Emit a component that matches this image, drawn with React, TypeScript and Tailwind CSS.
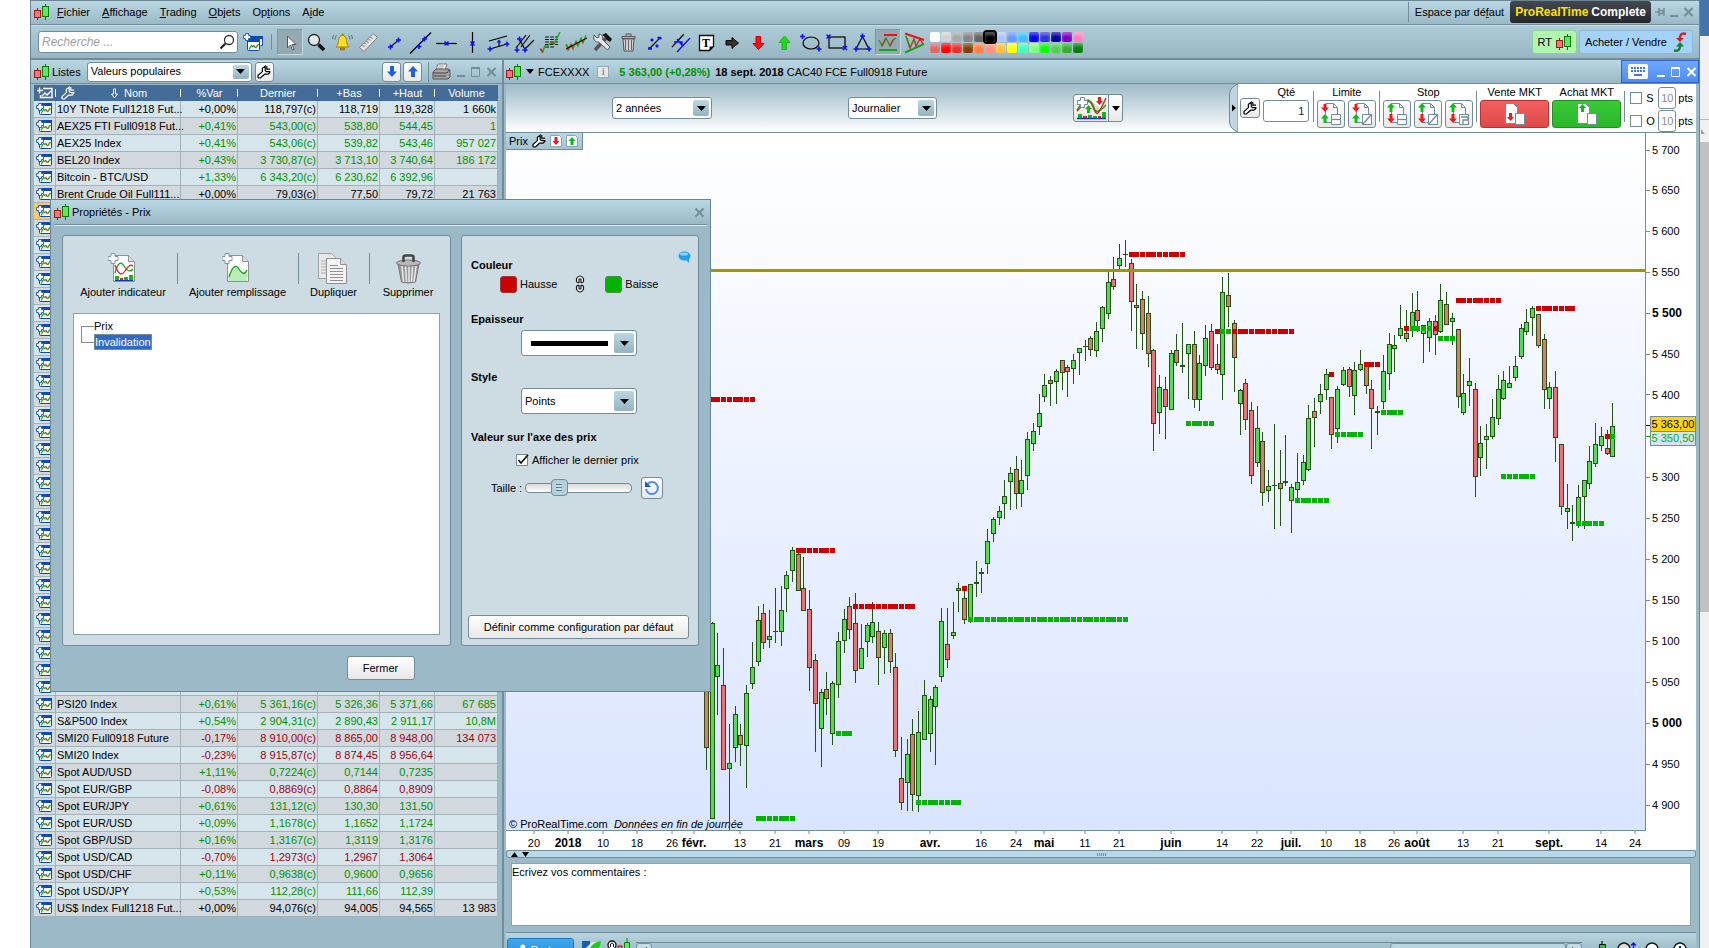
import type { ReactNode } from 'react';

type Tone = 'up' | 'down' | 'flat';
type Quote = [string, string, string, string, string, string, Tone];

const topQuotes: Quote[] = [
  ['10Y TNote Full1218 Fut...', '+0,00%', '118,797(c)', '118,719', '119,328', '1 660k', 'flat'],
  ['AEX25 FTI Full0918 Fut...', '+0,41%', '543,00(c)', '538,80', '544,45', '1', 'up'],
  ['AEX25 Index', '+0,41%', '543,06(c)', '539,82', '543,46', '957 027', 'up'],
  ['BEL20 Index', '+0,43%', '3 730,87(c)', '3 713,10', '3 740,64', '186 172', 'up'],
  ['Bitcoin - BTC/USD', '+1,33%', '6 343,20(c)', '6 230,62', '6 392,96', '', 'up'],
  ['Brent Crude Oil Full111...', '+0,00%', '79,03(c)', '77,50', '79,72', '21 763', 'flat'],
];

const bottomQuotes: Quote[] = [
  ['PSI20 Index', '+0,61%', '5 361,16(c)', '5 326,36', '5 371,66', '67 685', 'up'],
  ['S&P500 Index', '+0,54%', '2 904,31(c)', '2 890,43', '2 911,17', '10,8M', 'up'],
  ['SMI20 Full0918 Future', '-0,17%', '8 910,00(c)', '8 865,00', '8 948,00', '134 073', 'down'],
  ['SMI20 Index', '-0,23%', '8 915,87(c)', '8 874,45', '8 956,64', '', 'down'],
  ['Spot AUD/USD', '+1,11%', '0,7224(c)', '0,7144', '0,7235', '', 'up'],
  ['Spot EUR/GBP', '-0,08%', '0,8869(c)', '0,8864', '0,8909', '', 'down'],
  ['Spot EUR/JPY', '+0,61%', '131,12(c)', '130,30', '131,50', '', 'up'],
  ['Spot EUR/USD', '+0,09%', '1,1678(c)', '1,1652', '1,1724', '', 'up'],
  ['Spot GBP/USD', '+0,16%', '1,3167(c)', '1,3119', '1,3176', '', 'up'],
  ['Spot USD/CAD', '-0,70%', '1,2973(c)', '1,2967', '1,3064', '', 'down'],
  ['Spot USD/CHF', '+0,11%', '0,9638(c)', '0,9600', '0,9656', '', 'up'],
  ['Spot USD/JPY', '+0,53%', '112,28(c)', '111,66', '112,39', '', 'up'],
  ['US$ Index Full1218 Fut...', '+0,00%', '94,076(c)', '94,005', '94,565', '13 983', 'flat'],
];

const blankQuotes: Quote[] = Array.from({ length: 29 }, () => ['', '', '', '', '', '', 'flat'] as Quote);
const quotes = [...topQuotes, ...blankQuotes, ...bottomQuotes];

const toneClass: Record<Tone, string> = {
  up: 'text-[#009300]',
  down: 'text-[#a00010]',
  flat: 'text-black',
};

// x, high, body top, body bottom, low, direction (1 up, 0 down)
const candles: number[][] = [
  [706, 640, 650, 748, 770, 0], [712, 622, 623, 819, 819, 1], [717, 633, 665, 677, 715, 1], [723, 648, 685, 770, 770, 0],
  [729, 724, 763, 769, 830, 1], [735, 706, 714, 748, 762, 1], [740, 724, 735, 745, 766, 0], [746, 685, 693, 746, 788, 1],
  [752, 642, 667, 684, 689, 1], [758, 606, 620, 662, 666, 1], [763, 604, 613, 643, 649, 0], [769, 610, 636, 640, 648, 1],
  [775, 588, 631, 632, 643, 1], [781, 586, 610, 632, 646, 1], [786, 571, 575, 589, 612, 1], [792, 547, 550, 571, 582, 1],
  [798, 552, 554, 591, 591, 0], [803, 557, 588, 611, 611, 0], [809, 590, 609, 668, 691, 0], [815, 654, 660, 704, 752, 0],
  [821, 689, 692, 729, 767, 1], [826, 672, 689, 699, 715, 0], [832, 681, 683, 734, 745, 1], [838, 632, 641, 685, 698, 1],
  [844, 609, 619, 641, 653, 1], [849, 597, 606, 630, 639, 0], [855, 593, 623, 671, 683, 0], [861, 624, 648, 669, 669, 1],
  [867, 623, 625, 642, 657, 1], [872, 602, 622, 637, 643, 1], [878, 622, 631, 658, 685, 0], [884, 630, 633, 648, 674, 1],
  [890, 629, 633, 662, 673, 0], [895, 653, 667, 751, 757, 0], [901, 737, 778, 803, 810, 0], [907, 739, 754, 783, 811, 1],
  [912, 719, 734, 795, 811, 0], [918, 711, 732, 796, 812, 1], [924, 680, 695, 740, 740, 1], [930, 696, 699, 734, 752, 1],
  [935, 685, 687, 707, 765, 1], [941, 608, 621, 677, 682, 1], [947, 608, 644, 660, 668, 0], [953, 602, 632, 636, 639, 1],
  [958, 583, 588, 591, 612, 0], [964, 591, 598, 620, 624, 0], [970, 584, 584, 622, 623, 1], [976, 561, 582, 584, 597, 1],
  [981, 568, 572, 574, 593, 1], [987, 529, 541, 564, 574, 1], [993, 517, 519, 534, 542, 1], [999, 506, 511, 518, 525, 1],
  [1004, 480, 496, 504, 519, 1], [1010, 467, 473, 482, 510, 1], [1016, 456, 469, 494, 509, 0], [1021, 460, 480, 494, 507, 1],
  [1027, 432, 439, 476, 490, 1], [1033, 423, 431, 444, 451, 1], [1039, 394, 413, 427, 435, 1], [1044, 374, 385, 397, 402, 1],
  [1050, 376, 380, 384, 406, 0], [1056, 369, 371, 382, 404, 1], [1062, 360, 360, 373, 390, 0], [1067, 365, 367, 372, 397, 0],
  [1073, 354, 360, 369, 384, 1], [1079, 348, 348, 353, 375, 1], [1085, 340, 346, 347, 361, 1], [1090, 336, 338, 350, 356, 0],
  [1096, 322, 331, 351, 357, 1], [1102, 306, 307, 329, 342, 1], [1108, 272, 282, 314, 319, 1], [1113, 257, 279, 287, 290, 0],
  [1119, 244, 258, 266, 269, 1], [1125, 240, 254, 255, 267, 1], [1131, 259, 263, 302, 331, 0], [1136, 284, 305, 308, 349, 0],
  [1142, 291, 299, 334, 350, 0], [1148, 296, 313, 354, 367, 0], [1153, 349, 350, 424, 451, 0], [1159, 375, 387, 413, 434, 1],
  [1165, 377, 389, 407, 439, 0], [1171, 350, 353, 410, 410, 1], [1176, 334, 350, 363, 366, 0], [1182, 323, 365, 367, 373, 1],
  [1188, 344, 344, 354, 399, 1], [1194, 331, 344, 400, 408, 0], [1199, 355, 363, 400, 411, 1], [1205, 325, 338, 366, 376, 1],
  [1211, 324, 331, 368, 370, 0], [1217, 344, 364, 370, 374, 0], [1222, 277, 292, 375, 400, 1], [1228, 273, 295, 307, 327, 0],
  [1234, 320, 323, 358, 392, 0], [1240, 389, 390, 404, 435, 1], [1245, 379, 383, 420, 430, 0], [1251, 402, 410, 476, 484, 0],
  [1257, 406, 428, 463, 467, 1], [1262, 432, 441, 493, 506, 0], [1268, 470, 486, 491, 502, 1], [1274, 424, 485, 486, 529, 1],
  [1280, 450, 483, 489, 526, 0], [1285, 435, 481, 483, 486, 1], [1291, 484, 487, 501, 533, 1], [1297, 453, 482, 490, 498, 1],
  [1303, 455, 462, 481, 485, 1], [1308, 405, 418, 470, 471, 1], [1314, 398, 411, 418, 447, 0], [1320, 384, 394, 402, 414, 1],
  [1326, 369, 374, 390, 400, 1], [1331, 397, 397, 435, 449, 0], [1337, 386, 389, 429, 443, 1], [1343, 367, 370, 385, 386, 1],
  [1349, 367, 369, 387, 397, 0], [1354, 362, 370, 396, 415, 1], [1360, 350, 364, 370, 371, 1], [1366, 366, 366, 386, 394, 0],
  [1371, 380, 389, 409, 449, 0], [1377, 406, 411, 413, 435, 1], [1383, 355, 371, 402, 409, 1], [1389, 333, 344, 374, 390, 1],
  [1394, 335, 345, 349, 372, 1], [1400, 305, 328, 336, 339, 1], [1406, 310, 333, 339, 342, 0], [1412, 293, 312, 328, 337, 1],
  [1417, 291, 310, 321, 332, 0], [1423, 325, 325, 334, 363, 1], [1429, 318, 321, 338, 352, 1], [1435, 315, 321, 335, 355, 0],
  [1440, 284, 300, 332, 333, 1], [1446, 292, 304, 325, 325, 0], [1452, 313, 318, 322, 345, 1], [1458, 329, 329, 397, 408, 0],
  [1463, 374, 393, 413, 415, 1], [1469, 358, 381, 386, 406, 1], [1475, 383, 389, 477, 497, 0], [1480, 426, 443, 458, 476, 1],
  [1486, 424, 436, 440, 469, 1], [1492, 399, 417, 437, 439, 1], [1498, 375, 389, 419, 425, 1], [1503, 371, 380, 399, 400, 1],
  [1509, 366, 383, 388, 388, 1], [1515, 356, 366, 378, 381, 1], [1521, 324, 328, 357, 359, 1], [1526, 309, 322, 332, 335, 1],
  [1532, 306, 308, 318, 336, 1], [1538, 314, 314, 346, 348, 0], [1544, 334, 339, 390, 409, 0], [1549, 382, 387, 399, 409, 1],
  [1555, 371, 387, 438, 462, 0], [1561, 444, 444, 507, 515, 0], [1567, 484, 508, 512, 529, 1], [1572, 505, 522, 524, 541, 1],
  [1578, 485, 497, 522, 528, 1], [1584, 480, 480, 497, 529, 1], [1589, 446, 461, 484, 489, 1], [1595, 423, 444, 464, 467, 1],
  [1601, 427, 436, 446, 451, 1], [1607, 430, 448, 454, 455, 0], [1612, 403, 426, 457, 457, 1],
];

// first x, last x, y, kind (1 support, 0 resistance)
const levels: number[][] = [
  [712, 752, 399, 0], [798, 832, 550, 0], [855, 912, 606, 0], [964, 964, 588, 0], [970, 1125, 619, 1], [838, 849, 733, 1],
  [918, 958, 802, 1], [758, 792, 818, 1], [1131, 1182, 254, 0], [1188, 1211, 423, 1], [1217, 1217, 331, 0], [1222, 1228, 331, 1],
  [1234, 1291, 331, 0], [1331, 1331, 374, 0], [1297, 1326, 500, 1], [1337, 1360, 434, 1], [1366, 1377, 364, 0],
  [1383, 1400, 412, 1], [1406, 1406, 328, 0], [1412, 1429, 328, 1], [1435, 1435, 328, 0], [1440, 1452, 338, 1],
  [1458, 1498, 300, 0], [1503, 1532, 476, 1], [1538, 1572, 308, 0], [1578, 1601, 523, 1], [1607, 1607, 436, 0], [1612, 1612, 436, 1],
];

const dates: [string, number][] = [
  ['20', 534], ['2018', 568], ['10', 603], ['18', 637], ['26', 672], ['févr.', 694], ['13', 740], ['21', 775], ['mars', 809],
  ['09', 844], ['19', 878], ['avr.', 930], ['16', 981], ['24', 1016], ['mai', 1044], ['11', 1085], ['21', 1119], ['juin', 1171],
  ['14', 1222], ['22', 1257], ['juil.', 1291], ['10', 1326], ['18', 1360], ['26', 1394], ['août', 1417], ['13', 1463],
  ['21', 1498], ['sept.', 1549], ['14', 1601], ['24', 1635],
];

const prices = [5700, 5650, 5600, 5550, 5500, 5450, 5400, 5300, 5250, 5200, 5150, 5100, 5050, 5000, 4950, 4900];

const PLOT = { x: 506, y: 133, w: 1139, h: 697 };

const topColors = [
  'bg-[#ffffff]', 'bg-[#d0d0d0]', 'bg-[#a8a8a8]', 'bg-[#868686]', 'bg-[#646464]', 'bg-[#000000]', 'bg-[#b0c4ff]',
  'bg-[#6699ff]', 'bg-[#3fbfff]', 'bg-[#0000f0]', 'bg-[#3333d8]', 'bg-[#0000a0]', 'bg-[#8000c0]', 'bg-[#ff80c0]',
];
const bottomColors = [
  'bg-[#e06666]', 'bg-[#ff0000]', 'bg-[#e83030]', 'bg-[#804000]', 'bg-[#ff8040]', 'bg-[#ff9080]', 'bg-[#ffc040]',
  'bg-[#ffff00]', 'bg-[#40ffc0]', 'bg-[#80ff80]', 'bg-[#00ff00]', 'bg-[#50d050]', 'bg-[#30b030]', 'bg-[#008000]',
];

const bar = 'bg-linear-to-b from-[#bad7e4] to-[#9ab8c5]';
const softButton = 'rounded-[3px] border border-[#738c99] bg-linear-to-b from-white to-[#e8e8e8]';

function Candles() {
  return (
    <svg width="15" height="16" viewBox="0 0 15 16" shapeRendering="crispEdges" className="shrink-0">
      <path d="M3.5 4v12" stroke="#a01818" />
      <rect x=".5" y="6.5" width="6" height="7" fill="#f07878" stroke="#a01818" />
      <path d="M11.5 0v16" stroke="#0a7a0a" />
      <rect x="8.5" y="2.5" width="6" height="10" fill="#5de85d" stroke="#0a7a0a" />
    </svg>
  );
}

function Wrench({ className = 'text-black', fill = '#fff' }: { className?: string; fill?: string }) {
  return (
    <svg width="14" height="14" viewBox="0 0 14 14" className={className}>
      <path
        d="M8.2 1.2v4.2l1.2 1.2h3.4v.8L11 9.2H7.6L3.4 13H1.6L1 12.4v-1.8l4.4-4V3.2zM9.8 1v3.2h3.2"
        fill={fill}
        stroke="currentColor"
        strokeWidth="1.2"
      />
    </svg>
  );
}

function WindowGlyph({ big = false }: { big?: boolean }) {
  return (
    <svg width={big ? 20 : 16} height={big ? 19 : 12} viewBox={big ? '0 0 20 19' : '0 0 16 12'} className="block">
      {big && <path d="M5.5 6V3.5h14v9h-2" fill="#fff" stroke="#0b48b8" />}
      {big && <path d="M5 3h15v3H5z" fill="#0b48b8" />}
      <g transform={big ? 'translate(1 6)' : ''}>
        <rect x="3.5" y=".5" width="12" height="11" rx="1" fill="#fff" stroke="#0b48b8" />
        <path d="M3 0h13v3H3z" fill="#0b48b8" />
        <path d="M5 10.500l2.500-4 2 1.500" fill="none" stroke="#10b020" strokeWidth="1.300" />
        <path d="M9.500 6l2 3" fill="none" stroke="#e02020" strokeWidth="1.300" />
        <path d="M11.500 9l3-4" fill="none" stroke="#10b020" strokeWidth="1.300" />
      </g>
      <path d="M2.500.500h3v2h2v3h-2v2h-3v-2h-2v-3h2z" fill="#fff" stroke="#2a62c8" />
    </svg>
  );
}

function WindowButtons({ max = true, tone = 'text-[#738c99]' }: { max?: boolean; tone?: string }) {
  return (
    <div className={`flex items-center gap-1 ${tone}`}>
      <button aria-label="Réduire">
        <svg width="10" height="12" viewBox="0 0 10 12"><path d="M1 10h8" stroke="currentColor" strokeWidth="2" /></svg>
      </button>
      {max && (
        <button aria-label="Agrandir">
          <svg width="12" height="12" viewBox="0 0 12 12"><path d="M1.500 2v8.500h8V2z" fill="none" stroke="currentColor" /><path d="M1 2h9" stroke="currentColor" strokeWidth="2" /></svg>
        </button>
      )}
      <button aria-label="Fermer la fenêtre">
        <svg width="11" height="12" viewBox="0 0 11 12"><path d="M1.500 2l8 8M9.500 2l-8 8" stroke="currentColor" strokeWidth="2" /></svg>
      </button>
    </div>
  );
}

function Combo({ label, value, className, arrow = 'w-4', children }: { label: string; value: string; className: string; arrow?: string; children?: ReactNode }) {
  return (
    <div className={`relative ${className}`}>
      <select aria-label={label} className="h-full w-full appearance-none rounded-[3px] border border-[#738c99] bg-white px-[3px] text-[11px] leading-none">
        <option>{value}</option>
      </select>
      {children}
      <span className={`pointer-events-none absolute top-[3px] right-[3px] bottom-[3px] flex items-center justify-center rounded-[2px] bg-linear-to-b from-[#bad7e4] to-[#94b3c1] ${arrow}`}>
        <svg width="9" height="5" viewBox="0 0 9 5"><path d="M0 0h9L4.500 5z" /></svg>
      </span>
    </div>
  );
}

function Star({ x, y }: { x: number; y: number }) {
  return <path d={`M${x - 2.5} ${y}h5M${x} ${y - 2.5}v5`} stroke="#1010ff" strokeWidth="1.6" />;
}

const k = { fill: 'none', stroke: '#000', strokeWidth: 1.2 };

const tools: { name: string; on?: boolean; art: ReactNode }[] = [
  { name: 'Curseur', on: true, art: <path d="M8.500 5v12l3-3 2 5 1.500-.800-2-4.700h4z" fill="#fff" stroke="#555" /> },
  {
    name: 'Loupe',
    art: (
      <>
        <circle cx="9" cy="9" r="5.500" fill="#e0e8ec" stroke="#222" strokeWidth="1.300" />
        <path d="M6 8q1-2.500 4-2.500" fill="none" stroke="#fff" strokeWidth="1.500" />
        <path d="M13.500 13.500l5.500 5.500" stroke="#111" strokeWidth="3.500" />
      </>
    ),
  },
  {
    name: 'Alerte',
    art: (
      <>
        <path d="M5 16c2-2 2-3 2.500-6.500C8 6 9.500 4.500 11.500 4.500S15 6 15.500 9.500c.5 3.500.5 4.500 2.500 6.500z" fill="#ffe020" stroke="#a08010" />
        <path d="M9.500 17h4v2h-4z" fill="#d09000" stroke="#806000" strokeWidth=".7" />
        <path d="M11.500 2.500v2" stroke="#a08010" strokeWidth="2" />
        <path d="M5.500 4.500Q4 6 4 8.500M3 4Q1.500 5.500 1.500 8M17.500 4.500q1.500 1.500 1.500 4M20 4q1.500 1.500 1.500 4" fill="none" stroke="#607078" />
      </>
    ),
  },
  {
    name: 'Règle',
    art: (
      <>
        <path d="M2.500 16.500L16 2.500l4.500 4L7 20.500z" fill="#e2e2e2" stroke="#808080" />
        <path d="M5.500 14l2 2M7.500 12l1.500 1.500M9.500 10l2 2M11.500 8l1.500 1.500M13.500 6l2 2" stroke="#666" />
      </>
    ),
  },
  { name: 'Segment', art: <><path d="M7 16.500L16 8.500" {...k} /><Star x={7.5} y={16} /><Star x={15.5} y={9} /></> },
  { name: 'Droite', art: <><path d="M1 22.500L22 1.500" {...k} /><Star x={10} y={15.5} /><Star x={15.5} y={8} /></> },
  { name: 'Horizontale', art: <><path d="M1 12.500h21" {...k} /><path d="M9.500 10.500l4 4M13.500 10.500l-4 4" stroke="#1010ff" strokeWidth="1.600" /></> },
  { name: 'Verticale', art: <><path d="M11.500 1v21" {...k} /><path d="M9.500 10.500l4 4M13.500 10.500l-4 4" stroke="#1010ff" strokeWidth="1.600" /></> },
  { name: 'Canal', art: <><path d="M2 10l18-5M3 18l17-5M12 10v6" {...k} /><Star x={3} y={18} /><Star x={20} y={13} /><path d="M9.500 11.500h5L12 8.500z" fill="#1010ff" /></> },
  { name: 'Fourchette', art: <><path d="M3 17L13 4M8 16L17 4M12 18L21 9M6 8l7 12" {...k} /><Star x={6.5} y={8} /><Star x={4} y={19} /><Star x={12} y={19} /></> },
  {
    name: 'Fibonacci',
    art: (
      <>
        <path d="M6 6h13M6 8.500h13M6 11h13M6 13.500h13M6 16h10" stroke="#111" strokeDasharray="4 1" />
        <path d="M1.500 18l2 3 3-7M8 15l4-3 3 1 6-12" fill="none" stroke="#18b018" strokeWidth="1.500" />
        <path d="M1.500 17.500l2.500 4M12 11l3 2" stroke="#e02020" strokeWidth="1.500" />
      </>
    ),
  },
  {
    name: 'Régression',
    art: (
      <>
        <path d="M1 13l2 6 3-6 2 5 3-8 2 5 3-8 2 5 3-8" fill="none" stroke="#18b018" strokeWidth="1.300" />
        <path d="M2 14l2 5M6 13l2 5M11 11l2 4M16 8l2 4" stroke="#e03030" strokeWidth="1.300" />
        <path d="M1 18L22 7" {...k} />
      </>
    ),
  },
  {
    name: 'Outils',
    art: (
      <>
        <path d="M4 19L16 6" stroke="#555" strokeWidth="3.500" />
        <path d="M11 4l4-2 6 6-2 3-3-2-2-3z" fill="#111" />
        <path d="M3 4l3 3 2-1 0-3c3 0 4 3 3 5l8 8-2.500 3-9-8C4 12 2 8 3 4z" fill="#e5e5e5" stroke="#555" />
      </>
    ),
  },
  {
    name: 'Corbeille',
    art: (
      <>
        <path d="M6 8h11l-1 12H7z" fill="#d0d0d0" stroke="#555" />
        <path d="M8.500 9v10M11.500 9v10M14.500 9v10" stroke="#666" />
        <path d="M5 5.500h13v2H5zM9 5V3h5v2" fill="#bbb" stroke="#555" />
      </>
    ),
  },
  { name: 'Copier objet', art: <><path d="M6.500 17.500L17 7" {...k} /><path d="M5 17.500h4M14.500 7h4M8 8l2 2M13 14l2 2" {...k} stroke="#1010ff" strokeWidth={2.600} /></> },
  { name: 'Parallèle', art: <><path d="M3 16L15 3" {...k} /><path d="M8 21L21 7M5 11h8v5M8 8l5 6" {...k} stroke="#1010ff" strokeWidth={1.4} /></> },
  {
    name: 'Texte',
    art: (
      <>
        <path d="M4.500 4.500h14v11l-4 4h-10z" fill="#fff" stroke="#111" strokeWidth="1.300" />
        <path d="M18.500 15.500h-4v4z" fill="#111" />
        <text x="11" y="16" fontFamily="Liberation Serif" fontWeight="bold" fontSize="12" textAnchor="middle">T</text>
      </>
    ),
  },
  { name: 'Flèche', art: <path d="M5 9.500h6V6.500l6.500 5.500L11 17.500v-3.500H5z" fill="#333" stroke="#000" /> },
  { name: 'Flèche bas', art: <path d="M9 5.500h4.500v7H17L11.500 18.500 6 12.500h3z" fill="#ff1010" stroke="#c00" /> },
  { name: 'Flèche haut', art: <path d="M9 18.500h4.500v-7H17L11.500 5 6 11.500h3z" fill="#20d820" stroke="#18b818" /> },
  { name: 'Ellipse', art: <><ellipse cx="12" cy="12" rx="8" ry="6" {...k} /><Star x={3.5} y={5.500} /><Star x={20} y={18} /></> },
  { name: 'Rectangle', art: <><rect x="4" y="6" width="16" height="11" {...k} /><path d="M1.500 3.500l4 4M5.500 3.500l-4 4M18 15l4 4M22 15l-4 4" stroke="#1010ff" strokeWidth="1.500" /></> },
  { name: 'Triangle', art: <><path d="M5 18L11.500 5.500 18 18z" {...k} /><Star x={5} y={18} /><Star x={18} y={18} /><Star x={11.5} y={5} /></> },
  {
    name: 'Canal horizontal',
    on: true,
    art: (
      <>
        <path d="M7 4h13" stroke="#f01010" strokeWidth="2" />
        <path d="M2 19h18" stroke="#10a818" strokeWidth="2" />
        <path d="M2 9l3 6 4-8 4 8 3-6 3-2" fill="none" stroke="#18a018" strokeWidth="1.400" />
        <path d="M5 15l3.500-7M13 15l3-6" stroke="#e02020" strokeWidth="1.300" />
      </>
    ),
  },
  {
    name: 'Triangle de tendance',
    art: (
      <>
        <path d="M2 2.500L21 9" stroke="#f01010" strokeWidth="2" />
        <path d="M2 21.500L21 13" stroke="#10a818" strokeWidth="2" />
        <path d="M3 5l4 12 4-9 2 7 4-7 3 5" fill="none" stroke="#e02020" strokeWidth="1.400" />
        <path d="M3 5l3 9M11 8l2 7" stroke="#18a018" strokeWidth="1.400" />
      </>
    ),
  },
];

const menus: [string, string, string][] = [
  ['', 'F', 'ichier'],
  ['', 'A', 'ffichage'],
  ['', 'T', 'rading'],
  ['', 'O', 'bjets'],
  ['Op', 't', 'ions'],
  ['A', 'i', 'de'],
];

function MenuBar() {
  return (
    <header className={`flex h-6 shrink-0 items-center border-b border-[#738c99] pr-[5px] pb-px pl-[3px] ${bar}`}>
      <Candles />
      <nav className="ml-2 flex flex-1 gap-3">
        {menus.map(([before, key, after]) => (
          <button key={after}>{before}<u>{key}</u>{after}</button>
        ))}
      </nav>
      <span className="h-5 w-px bg-[#738c99]" />
      <button className="px-[6px]">Espace par dé<u>f</u>aut</button>
      <span className="flex h-[22px] items-center rounded-[3px] bg-linear-to-b from-[#44484f] to-[#25282d] px-[5px] text-[12px] font-bold text-white">
        <span className="mr-[3px] text-[#ffe000]">ProRealTime</span>Complete
      </span>
      <button aria-label="Épingler" className="mx-[4px] text-[#738c99]">
        <svg width="10" height="10" viewBox="0 0 10 10"><path d="M0 5h4M4 1v8M4 3.500h4v3H4M9 1v8" fill="none" stroke="currentColor" strokeWidth="1.500" /></svg>
      </button>
      <WindowButtons max={false} />
    </header>
  );
}

function ToolBar() {
  return (
    <div className="flex h-[35px] shrink-0 items-center border-t border-b-2 border-t-[#c8e0ea] border-b-[#738c99] bg-linear-to-b from-[#aecbd8] to-[#98b6c3] pr-[6px] pl-[7px]">
      <label className="flex h-[22px] w-[200px] items-center rounded-[3px] border border-[#738c99] bg-white pr-[2px] pl-[3px]">
        <input placeholder="Recherche ..." aria-label="Recherche" className="w-full min-w-0 text-[12px] italic outline-none placeholder:text-[#a0a0a0]" />
        <svg width="16" height="16" viewBox="0 0 16 16" className="shrink-0">
          <circle cx="10" cy="6" r="4.500" fill="none" stroke="#333" strokeWidth="1.300" />
          <path d="M6.500 9.500L1.500 14.500" stroke="#222" strokeWidth="2.200" />
        </svg>
      </label>
      <button aria-label="Nouvelle liste" className="ml-[5px]"><WindowGlyph big /></button>
      <span className="mr-[5px] ml-2 h-4 w-px bg-[#738c99]" />
      <div className="flex">
        {tools.map((t) => (
          <button
            key={t.name}
            aria-label={t.name}
            className={`flex h-[26px] w-[26px] items-center justify-center ${t.on ? 'border border-[#80969f] border-r-[#c5d6de] border-b-[#c5d6de] bg-[#93a9b4]' : ''}`}
          >
            <svg width="23" height="23" viewBox="0 0 23 23" className="shrink-0">{t.art}</svg>
          </button>
        ))}
      </div>
      <div className="ml-[3px] grid grid-cols-[repeat(14,11px)] gap-y-px">
        {[...topColors, ...bottomColors].map((c, i) => (
          <button
            key={c}
            aria-label={`Couleur ${i + 1}`}
            className={`h-[10px] w-[10px] rounded-[2px] shadow-[inset_0_3px_3px_#ffffff55] ${c} ${i === 5 ? 'z-10 outline-2 outline-black' : ''}`}
          />
        ))}
      </div>
      <div className="flex-1" />
      <button className="flex h-6 items-center gap-1 rounded-[3px] border border-[#8fd09a] bg-[#b0f5b0] px-[5px]">
        RT <Candles />
      </button>
      <button className="ml-[2px] flex h-6 items-center gap-[6px] rounded-[3px] border border-[#8db8dc] bg-[#a5d2f8] px-[5px]">
        Acheter / Vendre
        <svg width="14" height="20" viewBox="0 0 14 20">
          <path d="M13 2Q8 0 7 5v2" fill="none" stroke="#d02020" strokeWidth="2.500" />
          <path d="M3 6h8l-4 4z" fill="#d02020" />
          <path d="M1 18.500Q7 19.500 7 14v-1" fill="none" stroke="#188028" strokeWidth="2.500" />
          <path d="M3 14.500h8L7 10z" fill="#188028" />
        </svg>
      </button>
    </div>
  );
}

const headings = ['', 'Nom', '%Var', 'Dernier', '+Bas', '+Haut', 'Volume'];

function Lists() {
  return (
    <section className="flex w-[471px] shrink-0 flex-col bg-[#9bb9c6]">
      <div className={`flex h-6 shrink-0 items-center border-b border-[#738c99] pr-[5px] pl-[3px] ${bar}`}>
        <Candles />
        <span className="mr-[6px] ml-[3px]">Listes</span>
        <Combo label="Listes" value="Valeurs populaires" className="h-5 w-[165px]" />
        <button aria-label="Réglages" className={`ml-[3px] flex h-5 w-[19px] items-center justify-center ${softButton}`}><Wrench /></button>
        <div className="flex-1" />
        <button aria-label="Descendre" className={`flex h-5 w-[19px] items-center justify-center ${softButton}`}>
          <svg width="10" height="11" viewBox="0 0 10 11"><path d="M3 0h4v5.500h3L5 11 0 5.500h3z" fill="#2060e0" /></svg>
        </button>
        <button aria-label="Monter" className={`ml-[2px] flex h-5 w-[19px] items-center justify-center ${softButton}`}>
          <svg width="10" height="11" viewBox="0 0 10 11"><path d="M3 11h4V5.500h3L5 0 0 5.500h3z" fill="#2060e0" /></svg>
        </button>
        <span className="mx-[6px] mr-[3px] h-5 w-px bg-[#738c99]" />
        <button aria-label="Imprimer" className="mr-[5px]">
          <svg width="19" height="17" viewBox="0 0 19 17">
            <path d="M6 1h9l-2 6H4z" fill="#fff" stroke="#777" />
            <path d="M7 3h5M6 5h5" stroke="#999" />
            <path d="M1 9l3-3h13l1 2v6l-2 2H1z" fill="#a5a5a5" stroke="#555" />
            <path d="M1 10h14l2-3M2 13h12" fill="none" stroke="#444" />
          </svg>
        </button>
        <WindowButtons />
      </div>
      <div className="pt-px pr-1 pl-[3px]">
        <table className="w-full table-fixed border-separate border-spacing-0">
          <colgroup>
            <col className="w-[22px]" />
            <col className="w-[125px]" />
            <col className="w-[57px]" />
            <col className="w-[80px]" />
            <col className="w-[62px]" />
            <col className="w-[55px]" />
            <col />
          </colgroup>
          <thead>
            <tr className="h-4 bg-[#436c98] text-white">
              {headings.map((h, i) => (
                <th key={h} className="relative p-0 text-center leading-[15px] font-normal">
                  {i === 0 && (
                    <svg width="16" height="12" viewBox="0 0 16 12" className="mx-auto block">
                      <path d="M2.500.500v6M0 3.500h6M6 1.500h9v9H3.500V8M5 9l3-3 2 2 4-4" fill="none" stroke="#fff" strokeWidth="1.400" />
                    </svg>
                  )}
                  {i === 1 && (
                    <span className="flex items-center">
                      <span className="ml-[5px]"><Wrench className="text-white" fill="none" /></span>
                      <svg width="9" height="11" viewBox="0 0 9 11" className="ml-[35px]"><path d="M3.500 1v5h-2l3 4 3-4h-2V1z" fill="none" stroke="#fff" /></svg>
                      <span className="ml-[5px]">{h}</span>
                    </span>
                  )}
                  {i > 1 && h}
                  {i < 6 && <span className="absolute top-1 right-0 h-2 w-px bg-white" />}
                </th>
              ))}
            </tr>
          </thead>
          <tbody>
            {quotes.map((q, i) => (
              <tr key={i} className={`h-[17px] leading-4 ${i % 2 ? 'bg-[#d1d8de]' : 'bg-[#d6e5ec]'}`}>
                <td className={`border-r border-b border-[#a3b1b8] p-0 pl-[2px] ${i === 6 ? 'bg-[#ffc66c]' : ''}`}><WindowGlyph /></td>
                <td className="border-r border-b border-[#a3b1b8] p-0 pl-px whitespace-nowrap">{q[0]}</td>
                {q.slice(1, 6).map((cell, j) => (
                  <td key={j} className={`border-r border-b border-[#a3b1b8] p-0 pr-px text-right whitespace-nowrap ${toneClass[q[6]]}`}>{cell}</td>
                ))}
              </tr>
            ))}
          </tbody>
        </table>
      </div>
    </section>
  );
}

// Order ticket glyph: arrows beside a sheet, with a mark on the small page
function OrderGlyph({ first, mark }: { first: 'up' | 'down'; mark: string }) {
  return (
    <svg width="22" height="24" viewBox="0 0 22 24" className="shrink-0">
      <path d="M5.500 1.500h8l4 4v15h-12z" fill="#fff" stroke="#738c99" />
      <path d="M13.500 1.500v4h4" fill="none" stroke="#738c99" />
      {first === 'down' ? (
        <>
          <path d="M3.500 2h3v3.500H9L5 10 1 5.500h2.500z" fill="#f01818" />
          <path d="M3.500 21h3v-4.500H9L5 12 1 16.500h2.500z" fill="#10b818" />
        </>
      ) : (
        <>
          <path d="M3.500 10h3V5.500H9L5 1 1 5.500h2.500z" fill="#10b818" />
          <path d="M3.500 12h3v4.500H9L5 21 1 16.500h2.500z" fill="#f01818" />
        </>
      )}
      <path d="M11.500 12.500h9v10h-9z" fill="#fff" stroke="#738c99" />
      <path d={mark} fill="none" stroke="#738c99" strokeWidth="1.300" />
    </svg>
  );
}

const BAR = 'M11.5 17.5h9';
const SLASH = 'M11.5 22.500L20.500 12.500';
const STEP = 'M13 15h7v3h-5v4';

function OrderGroup({ label, items }: { label: string; items: { first: 'up' | 'down'; mark: string }[] }) {
  return (
    <div className="flex flex-col items-center">
      <span className="h-4">{label}</span>
      <div className="flex gap-[3px]">
        {items.map((it, i) => (
          <button key={i} aria-label={`${label} ${i + 1}`} className={`flex h-7 w-7 items-center justify-center ${softButton}`}>
            <OrderGlyph {...it} />
          </button>
        ))}
      </div>
    </div>
  );
}

function Divider() {
  return <span className="mt-[7px] h-[31px] w-px shrink-0 bg-[#738c99]" />;
}

function PointsField({ name }: { name: string }) {
  return (
    <div className="flex h-[22px] items-center">
      <input id={`on-${name}`} type="checkbox" className="h-3 w-3 appearance-none border border-[#738c99] bg-white" />
      <label htmlFor={`on-${name}`} className="w-4 pl-1">{name}</label>
      <input aria-label={`Points ${name}`} defaultValue="10" className="h-[22px] w-[18px] rounded-[3px] border border-[#738c99] bg-white text-center text-[#7d8f99]" />
      <span className="ml-[2px]">pts</span>
    </div>
  );
}

function TradeBar() {
  return (
    <div className="flex h-[49px] shrink-0 border-b border-[#738c99] bg-linear-to-b from-[#9dbbc8] to-white">
      <div className="flex flex-1 items-start">
        <Combo label="Période" value="2 années" className="mt-[13px] ml-[106px] h-[22px] w-[100px]" />
        <Combo label="Unité de temps" value="Journalier" className="mt-[13px] ml-[136px] h-[22px] w-[89px]" />
        <div className={`mt-[10px] ml-[136px] flex h-7 w-[50px] ${softButton}`}>
          <button aria-label="Ajouter un indicateur" className="w-[35px] border-r border-[#738c99] pl-[2px]">
            <svg width="31" height="24" viewBox="0 0 31 24">
              <path d="M2 15L10 5q4-2 6 4t4 8 5-5l5-9v11l-6-2-8-6-8-3z" fill="#c0e8c0" />
              <path d="M1 14Q7 4 12 4q4 1 6 8t10-1l2-2" fill="none" stroke="#18a018" strokeWidth="1.300" />
              <path d="M1 15l8-8q5-4 8 4t5 6 8-15" fill="none" stroke="#d02020" strokeWidth="1.300" />
              <path d="M4.500 1.500h4v3h3v4h-3v3h-4v-3h-3v-4h3z" fill="#fff" stroke="#738c99" />
              <path d="M22 1h3v4h2l-3.500 4L20 5h2z" fill="#f01818" />
              <path d="M11 17h3v-4h2l-3.500-4L9 13h2z" fill="#10b818" />
              <path d="M2 18h4v4H2zM12 19h4v3h-4zM17 20h4v2h-4zM26 16h4v6h-4z" fill="#10b818" />
              <path d="M7 20h4v2H7zM22 20h3v2h-3z" fill="#e02020" />
              <path d="M1 22.500h29" stroke="#1030d0" strokeWidth="1.500" />
            </svg>
          </button>
          <button aria-label="Plus d'indicateurs" className="flex flex-1 items-center justify-center">
            <svg width="8" height="5" viewBox="0 0 8 5"><path d="M0 0h8L4 5z" /></svg>
          </button>
        </div>
      </div>
      <svg width="9" height="48" viewBox="0 0 9 48" className="shrink-0">
        <path d="M9 0Q1 3 .500 10v28Q1 45 9 48z" fill="#c2d5de" stroke="#738c99" />
        <path d="M3 20.500l4 3.500-4 3.500z" />
      </svg>
      <div className="flex shrink-0 bg-white pr-[3px] pl-[2px]">
        <button aria-label="Options d'ordre" className={`mt-[14px] flex h-5 w-5 items-center justify-center ${softButton}`}><Wrench /></button>
        <div className="ml-[3px] flex w-[46px] flex-col items-center">
          <label htmlFor="qty" className="h-4">Qté</label>
          <input id="qty" defaultValue="1" className="h-[22px] w-full rounded-[3px] border border-[#738c99] bg-white pr-1 text-right text-[#301030]" />
        </div>
        <div className="ml-1 flex gap-[3px]">
          <Divider />
          <OrderGroup label="Limite" items={[{ first: 'down', mark: BAR }, { first: 'down', mark: SLASH }]} />
          <Divider />
          <OrderGroup label="Stop" items={[{ first: 'up', mark: BAR }, { first: 'up', mark: SLASH }, { first: 'up', mark: STEP }]} />
          <Divider />
          <div className="flex flex-col items-center">
            <span className="h-4">Vente MKT</span>
            <button aria-label="Vente au marché" className="flex h-7 w-[69px] items-center justify-center rounded-[3px] border border-[#c03030] bg-linear-to-b from-[#f06060] to-[#e04848]">
              <svg width="22" height="24" viewBox="0 0 22 24">
                <path d="M1.500 1.500h8l4 4v16h-12z" fill="#fff" stroke="#738c99" />
                <path d="M5 11h3v4h2l-3.500 4L3 15h2z" fill="#f01818" />
                <path d="M11.500 11.500h9v11h-9z" fill="#fff" stroke="#738c99" />
              </svg>
            </button>
          </div>
          <div className="flex flex-col items-center">
            <span className="h-4">Achat MKT</span>
            <button aria-label="Achat au marché" className="flex h-7 w-[69px] items-center justify-center rounded-[3px] border border-[#209020] bg-linear-to-b from-[#38c838] to-[#28b828]">
              <svg width="22" height="24" viewBox="0 0 22 24">
                <path d="M1.500 1.500h8l4 4v16h-12z" fill="#fff" stroke="#738c99" />
                <path d="M5 10h3V6h2L6.500 2 3 6h2z" fill="#10b818" />
                <path d="M11.500 11.500h9v11h-9z" fill="#fff" stroke="#738c99" />
              </svg>
            </button>
          </div>
          <Divider />
        </div>
        <div className="ml-[5px] flex flex-col gap-px pt-[3px]">
          <PointsField name="S" />
          <PointsField name="O" />
        </div>
      </div>
    </div>
  );
}

function Plot() {
  const up = '#56db56';
  const down = '#ea7272';
  return (
    <svg viewBox={`${PLOT.x} ${PLOT.y} ${PLOT.w} ${PLOT.h}`} preserveAspectRatio="none" className="absolute inset-0 block h-full w-full" shapeRendering="crispEdges">
      {candles.map(([x, h, t, b, l, dir]) => (
        <g key={x}>
          <rect x={x} y={h} width="1" height={l - h} fill="#235412" />
          <rect x={x - 2} y={t} width="5" height={b - t} fill="#235412" />
          {b - t > 2 && <rect x={x - 1} y={t + 1} width="3" height={b - t - 2} fill={dir ? up : down} />}
        </g>
      ))}
      {levels.map(([from, to, y, kind]) =>
        candles
          .filter(([x]) => x >= from && x <= to)
          .map(([x]) => <rect key={`${x}-${y}`} x={x - 2} y={y - 2} width="5" height="5" fill={kind ? '#00b400' : '#cc0000'} />),
      )}
      <rect x={PLOT.x} y="269" width={PLOT.w} height="3" fill="#999900" />
    </svg>
  );
}

function priceY(p: number) {
  return Math.round(149.5 + ((5700 - p) / 50) * 40.95) - PLOT.y;
}

function PriceAxis() {
  return (
    <div className="relative w-[51px] shrink-0 border-l border-[#738c99] bg-white">
      <svg className="absolute inset-0 h-full w-full" shapeRendering="crispEdges">
        {prices.map((p) => {
          const bold = p % 500 === 0;
          const y = `${(priceY(p) / PLOT.h) * 100}%`;
          return (
            <g key={p}>
              <line x1="0" x2="4" y1={y} y2={y} stroke="#738c99" />
              <text x="6" y={y} dy="4" fontSize={bold ? 12 : 11} fontWeight={bold ? 'bold' : 'normal'}>
                {`${Math.floor(p / 1000)} ${String(p % 1000).padStart(3, '0')}`}
              </text>
            </g>
          );
        })}
        <line x1="0" x2="4" y1="42%" y2="42%" stroke="#000" />
        <line x1="0" x2="4" y1="43.500%" y2="43.500%" stroke="#00b400" />
      </svg>
      <div className="absolute top-[40.6%] right-0 left-1">
        <div className="h-4 border border-[#738c99] bg-[#ffd310] text-center leading-[14px]">5 363,00</div>
        <div className="-mt-px h-[15px] border border-[#738c99] bg-[#d6e2f5] text-center leading-[13px] text-[#00b400]">5 350,50</div>
      </div>
    </div>
  );
}

function DateAxis() {
  return (
    <svg className="block h-5 w-full shrink-0 bg-white">
      <line x1="0" x2="1140" y1=".5" y2=".5" stroke="#738c99" />
      {dates.map(([label, x]) => {
        const at = `${((x - PLOT.x) / 1190) * 100}%`;
        const bold = /[a-z]|2018/.test(label);
        return (
          <g key={x}>
            <line x1={at} x2={at} y1="0" y2="4" stroke="#738c99" />
            <text x={at} y="17" textAnchor="middle" fontSize={bold ? 12 : 11} fontWeight={bold ? 'bold' : 'normal'}>{label}</text>
          </g>
        );
      })}
    </svg>
  );
}

function BottomBar() {
  return (
    <div className="flex h-4 shrink-0 items-start gap-[6px] overflow-hidden border-t border-[#738c99] bg-linear-to-b from-[#b8d5e0] to-[#a0bfcc] pt-[5px]">
      <button className="ml-px flex h-6 w-[67px] shrink-0 items-center gap-[5px] rounded-[3px] border border-[#1a78c0] bg-linear-to-b from-[#3fa8ec] to-[#2088d8] pl-[5px] text-white">
        <svg width="13" height="13" viewBox="0 0 13 13"><path d="M10 3L3 7l7 4" fill="none" stroke="#fff" strokeWidth="1.500" /><circle cx="10" cy="3" r="2.500" fill="#fff" /><circle cx="3" cy="7" r="2.500" fill="#fff" /></svg>
        Partager
      </button>
      <svg width="50" height="20" viewBox="0 0 50 20" className="shrink-0">
        <path d="M2 3h8v14H2z" fill="#1560a8" />
        <path d="M6 10l6-6h8l-3 8-7 5z" fill="#e8e8e8" />
        <path d="M9 14q1-9 12-11-1 10-9 13z" fill="#18d018" />
        <circle cx="32" cy="7" r="4" fill="#fff" stroke="#111" strokeWidth="1.300" />
        <path d="M30.500 9V6q1.500-2 3 0v3" fill="none" stroke="#111" />
        <path d="M38 8h4v8h-4z" fill="#f07878" stroke="#a01818" />
        <path d="M47 0v5M44.500 4.500h5v12h-5z" fill="#5de85d" stroke="#0a7a0a" />
      </svg>
      <div className="mt-1 flex h-5 flex-1 border-t border-[#738c99]">
        <button aria-label="Défiler à gauche" className="flex w-4 justify-center rounded-[3px] border border-[#738c99] bg-[#c2dbe6] pt-[3px]"><svg width="5" height="7" viewBox="0 0 5 7"><path d="M5 0v7L0 3.500z" /></svg></button>
        <div className="flex-1" />
        <span className="flex w-[176px] justify-center rounded-[3px] border border-[#738c99] bg-[#b8d5e0] pt-1"><i className="h-1 w-[6px] border-t border-[#738c99]" /></span>
        <button aria-label="Défiler à droite" className="flex w-4 justify-center rounded-[3px] border border-[#738c99] bg-[#c2dbe6] pt-[3px]"><svg width="5" height="7" viewBox="0 0 5 7"><path d="M0 0v7l5-3.500z" /></svg></button>
      </div>
      <svg width="100" height="16" viewBox="0 0 100 16" className="mt-[3px] mr-2 shrink-0">
        <path d="M14 0v4" stroke="#555" strokeWidth="2" />
        <path d="M11.500 3.500h6v12h-6z" fill="#20c820" stroke="#111" />
        <circle cx="36" cy="8" r="6" fill="#ddd" stroke="#111" strokeWidth="1.400" />
        <path d="M45.500 2v9M43 4.500L45.500 2 48 4.500" fill="none" stroke="#1010e0" strokeWidth="1.400" />
        <circle cx="64" cy="8" r="6" fill="#fff" stroke="#111" strokeWidth="1.400" />
        <path d="M61 8h6" stroke="#1010e0" strokeWidth="2" />
        <circle cx="92" cy="8" r="6" fill="#fff" stroke="#111" strokeWidth="1.400" />
        <path d="M89 8h6M92 5v6" stroke="#1010e0" strokeWidth="2" />
      </svg>
    </div>
  );
}

function Chart() {
  return (
    <section className="flex min-w-0 flex-1 flex-col border-l-2 border-[#738c99] bg-[#9bb9c6]">
      <div className={`flex h-6 shrink-0 items-center border-b border-[#738c99] pl-[2px] ${bar}`}>
        <Candles />
        <svg width="8" height="5" viewBox="0 0 8 5" className="mr-1 ml-[5px]"><path d="M0 0h8L4 5z" /></svg>
        <span>FCEXXXX</span>
        <button aria-label="Informations" className="mr-[10px] ml-2 flex h-3 w-3 items-center justify-center border border-[#9aa8b0] bg-[#e8e8e8] font-serif text-[10px] leading-none font-bold text-[#8a97a0]">i</button>
        <span className="mr-[5px] font-bold text-[#009300]">5 363,00 (+0,28%)</span>
        <span className="mr-[3px] font-bold">18 sept. 2018</span>
        <span>CAC40 FCE Full0918 Future</span>
        <div className="flex-1" />
        <div className="flex h-full w-[78px] items-center gap-2 border border-[#2f63c8] bg-linear-to-b from-[#6fa8ff] to-[#4f8cf0] pl-[6px]">
          <svg width="20" height="15" viewBox="0 0 20 15">
            <rect width="20" height="15" rx="1.500" fill="#fff" />
            <path d="M3 4h14M3 7h14" stroke="#3f78e0" strokeWidth="2" strokeDasharray="2 1" />
            <path d="M6 11h8" stroke="#3f78e0" strokeWidth="2" />
          </svg>
          <WindowButtons tone="text-white" />
        </div>
      </div>
      <div className="flex min-h-0 flex-1 flex-col pr-[3px] pl-[2px]">
        <TradeBar />
        <div className="flex min-h-0 flex-1">
          <div className="relative flex-1 bg-linear-to-b from-white to-[#d9e4ff]">
            <p className="absolute bottom-0 left-[3px] leading-3">© ProRealTime.com&nbsp; <i>Données en fin de journée</i></p>
            <Plot />
            <div className="absolute top-0 left-0 flex h-[17px] w-[77px] items-center gap-1 border-r border-b border-[#738c99] bg-linear-to-b from-[#bad7e4] to-[#a4c2cf] pl-[3px]">
              Prix
              <Wrench />
              <svg width="28" height="13" viewBox="0 0 28 13">
                <path d="M.500.500h9l2 2v9H.500zM16.500.500h9l2 2v9h-11z" fill="#fff" stroke="#8da4b0" />
                <path d="M4.500 2h3v4h2L6 10 2.500 6h2z" fill="#f01818" />
                <path d="M20.500 10h3V6h2L22 2l-3.500 4h2z" fill="#10b818" />
              </svg>
            </div>
          </div>
          <PriceAxis />
        </div>
        <DateAxis />
        <div className="relative flex h-2 shrink-0 items-center justify-center rounded-[3px] border border-[#738c99] bg-[#b8dae7]">
          <svg width="20" height="5" viewBox="0 0 20 5" className="absolute left-1"><path d="M0 5h7L3.500 0zM11 0h7l-3.500 5z" /></svg>
          <svg width="9" height="3" viewBox="0 0 9 3" shapeRendering="crispEdges"><path d="M0 1.500h9" stroke="#738c99" strokeWidth="3" strokeDasharray="1 1" /></svg>
        </div>
        <div className="shrink-0 px-[5px] pt-[5px] pb-[6px]">
          <textarea aria-label="Commentaires" defaultValue="Ecrivez vos commentaires :" className="block h-[63px] w-full resize-none border border-[#8ba2ae] bg-white px-0 pt-[2px] leading-[13px]" />
        </div>
        <BottomBar />
      </div>
    </section>
  );
}

function Plus({ x }: { x: number }) {
  return <path d={`M${x + 4} .5h4v3h3v4h-3v3h-4v-3h-3v-4h3z`} fill="#fff" stroke="#8a979e" />;
}

const actions: { label: string; className: string; art: ReactNode }[] = [
  {
    label: 'Ajouter indicateur',
    className: 'w-[108px]',
    art: (
      <>
        <path d="M5.500 2.500h15l6 6v20h-21z" fill="#fff" stroke="#909090" />
        <path d="M20.500 2.500v6h6" fill="#ddd" stroke="#909090" />
        <path d="M7 20q4-15 9-7t9 3" fill="none" stroke="#18a018" strokeWidth="1.300" />
        <path d="M7 12q5 14 10 6t8-5" fill="none" stroke="#d02020" strokeWidth="1.300" />
        <path d="M7 23h4v4H7zM16 24h4v3h-4zM21 22h4v5h-4z" fill="#10b818" />
        <path d="M12 25h3v2h-3z" fill="#e02020" />
        <path d="M7 27.500h18" stroke="#1030d0" />
        <Plus x={-1} />
      </>
    ),
  },
  {
    label: 'Ajouter remplissage',
    className: 'w-[121px]',
    art: (
      <>
        <path d="M5.500 2.500h15l6 6v20h-21z" fill="#fff" stroke="#909090" />
        <path d="M20.500 2.500v6h6" fill="#ddd" stroke="#909090" />
        <path d="M7 24q5-16 10-8t8 1v11H7z" fill="#b8ecb8" />
        <path d="M7 24q5-16 10-8t8 1" fill="none" stroke="#18a018" strokeWidth="1.300" />
        <Plus x={-1} />
      </>
    ),
  },
  {
    label: 'Dupliquer',
    className: 'w-[71px]',
    art: (
      <>
        <path d="M.500.500h13l6 6v19H.500z" fill="#e8e8e8" stroke="#a0a0a0" />
        <path d="M3 8h10M3 11h6M3 14h6M3 17h6M3 20h6" stroke="#b0b0b0" />
        <path d="M8.500 5.500h14l6 6v19h-20z" fill="#f4f4f4" stroke="#909090" />
        <path d="M22.500 5.500v6h6" fill="#ddd" stroke="#909090" />
        <path d="M12 12.500h8M12 15.500h13M12 18.500h13M12 21.500h13M12 24.500h13M12 27.500h13" stroke="#909090" />
      </>
    ),
  },
  {
    label: 'Supprimer',
    className: 'w-[78px]',
    art: (
      <>
        <path d="M5 11h21l-3.500 18q-7 2-14 0z" fill="#9a9a9a" stroke="#777" />
        <path d="M9 13l1.500 16M12.500 13l1 16M16 13v16M19.500 13l-1 16M23 13l-2 16" stroke="#e8e8e8" strokeWidth="1.500" />
        <ellipse cx="15.500" cy="10" rx="12" ry="3" fill="#b8b8b8" stroke="#777" />
        <path d="M10.500 9V4q0-1.500 2-1.500h6q2 0 2 1.500v5" fill="none" stroke="#444" strokeWidth="2.500" />
      </>
    ),
  },
];

function Properties() {
  return (
    <div role="dialog" aria-labelledby="dlg" className="absolute top-[199px] left-[50px] z-20 flex h-[493px] w-[661px] flex-col border border-[#6c8592] bg-[#9bb9c6]">
      <div className={`flex h-6 shrink-0 items-center pr-[5px] pl-[3px] ${bar}`}>
        <Candles />
        <h2 id="dlg" className="ml-[3px] flex-1">Propriétés - Prix</h2>
        <button aria-label="Fermer la boîte" className="text-[#738c99]">
          <svg width="11" height="11" viewBox="0 0 11 11"><path d="M1.500 1.500l8 8M9.500 1.500l-8 8" stroke="currentColor" strokeWidth="2" /></svg>
        </button>
      </div>
      <div className="mx-[3px] h-[2px] shrink-0 border-t border-[#738c99] bg-[#d8e8ef]" />
      <div className="flex min-h-0 flex-1 gap-[10px] px-[11px] pt-[9px]">
        <div className="flex min-w-0 flex-1 flex-col rounded-[3px] border border-[#738c99] bg-[#cddce3]">
          <div className="flex pt-[17px] pl-[6px]">
            {actions.map((a, i) => (
              <button key={a.label} className={`relative flex shrink-0 flex-col items-center ${a.className}`}>
                {i > 0 && <span className="absolute top-0 left-0 h-[31px] w-px bg-[#738c99]" />}
                <svg width="31" height="31" viewBox="0 0 31 31">{a.art}</svg>
                <span className="mt-px h-[15px] leading-[15px] whitespace-nowrap">{a.label}</span>
              </button>
            ))}
          </div>
          <ul className="mx-[10px] mt-[13px] mb-[10px] flex-1 border border-[#8ba2ae] bg-white pt-1 pl-[7px]">
            <li className="flex h-4 items-center">
              <svg width="13" height="16" viewBox="0 0 13 16" shapeRendering="crispEdges"><path d="M.500 16V8.500H13" fill="none" stroke="#8c8c8c" /></svg>
              Prix
            </li>
            <li className="flex h-4 items-center">
              <svg width="13" height="16" viewBox="0 0 13 16" shapeRendering="crispEdges"><path d="M.500 0v8.500H13" fill="none" stroke="#8c8c8c" /></svg>
              <span className="border border-[#738c99] bg-[#316ac5] leading-[14px] text-white">Invalidation</span>
            </li>
          </ul>
        </div>
        <div className="relative flex w-[238px] shrink-0 flex-col rounded-[3px] border border-[#738c99] bg-[#cddce3] px-[9px]">
          <svg width="13" height="12" viewBox="0 0 13 12" className="absolute top-[15px] right-[7px]">
            <ellipse cx="6.500" cy="5" rx="6" ry="4.500" fill="#1ea0f0" />
            <path d="M7 8l4 4V7z" fill="#1ea0f0" />
            <ellipse cx="6" cy="3" rx="4" ry="1.500" fill="#8fd4ff" />
          </svg>
          <h3 className="mt-[21px] h-4 leading-4 font-bold">Couleur</h3>
          <div className="mt-[2px] flex h-[18px] items-center pl-[29px]">
            <button aria-label="Couleur hausse" className="h-[17px] w-[17px] rounded-[3px] border border-[#9c3838] bg-[#cc0000]" />
            <span className="ml-[3px]">Hausse</span>
            <svg width="10" height="18" viewBox="0 0 10 18" className="ml-[18px]">
              <path d="M1.500 6.500v-3q3.500-5 7 0v3q-1 1.500-2.500 1V4H4v3.500q-1.500.500-2.500-1zM1.500 11.500v3q3.500 5 7 0v-3q-1-1.500-2.500-1V14H4v-3.500q-1.500-.500-2.500 1z" fill="#fff" stroke="#111" strokeWidth="1.100" />
            </svg>
            <button aria-label="Couleur baisse" className="ml-5 h-[17px] w-[17px] rounded-[3px] border border-[#4a8a4a] bg-[#00b400]" />
            <span className="ml-[3px]">Baisse</span>
          </div>
          <h3 className="mt-[18px] h-4 leading-4 font-bold">Epaisseur</h3>
          <Combo label="Epaisseur" value="" className="mt-[3px] ml-[50px] h-[26px] w-[116px]" arrow="w-5">
            <span className="pointer-events-none absolute top-[11px] left-[10px] h-[5px] w-[77px] bg-black" />
          </Combo>
          <h3 className="mt-[13px] h-4 leading-4 font-bold">Style</h3>
          <Combo label="Style" value="Points" className="mt-[3px] ml-[50px] h-[26px] w-[116px]" arrow="w-5" />
          <h3 className="mt-[15px] h-4 leading-4 font-bold">Valeur sur l&apos;axe des prix</h3>
          <label className="relative mt-[7px] ml-[45px] flex h-4 items-center gap-1">
            <input type="checkbox" defaultChecked className="peer h-3 w-3 appearance-none border border-[#738c99] bg-white" />
            <svg width="12" height="11" viewBox="0 0 12 11" className="pointer-events-none absolute top-[2px] left-px hidden peer-checked:block">
              <path d="M1.500 6l2.500 3L11 .800" fill="none" stroke="#111" strokeWidth="1.700" />
            </svg>
            Afficher le dernier prix
          </label>
          <div className="mt-2 flex h-[23px] items-center pl-5">
            <label htmlFor="size" className="w-[34px] whitespace-nowrap">Taille :</label>
            <input
              id="size"
              type="range"
              defaultValue="28"
              className="h-[10px] w-[107px] appearance-none rounded-[4px] border border-[#738c99] bg-linear-to-b from-[#d8d8d8] to-white [&::-webkit-slider-thumb]:h-[17px] [&::-webkit-slider-thumb]:w-[17px] [&::-webkit-slider-thumb]:appearance-none [&::-webkit-slider-thumb]:rounded-[4px] [&::-webkit-slider-thumb]:border [&::-webkit-slider-thumb]:border-[#738c99] [&::-webkit-slider-thumb]:bg-[#b4d0dd] [&::-webkit-slider-thumb]:bg-[repeating-linear-gradient(#5f7a88_0_1px,#c4dbe5_1px_3px)] [&::-webkit-slider-thumb]:bg-size-[6px_7px] [&::-webkit-slider-thumb]:bg-center [&::-webkit-slider-thumb]:bg-no-repeat"
            />
            <button aria-label="Réinitialiser" className={`ml-[9px] flex h-[22px] w-[22px] items-center justify-center ${softButton}`}>
              <svg width="16" height="16" viewBox="0 0 16 16">
                <path d="M3.500 4A6 6 0 1 1 2 9" fill="none" stroke="#5a90e8" strokeWidth="2" />
                <path d="M1 1v6h6z" fill="#1858d0" />
              </svg>
            </button>
          </div>
          <div className="flex-1" />
          <button className={`-ml-[3px] mb-[6px] h-6 w-[221px] ${softButton}`}>Définir comme configuration par défaut</button>
        </div>
      </div>
      <div className="flex h-[45px] shrink-0 justify-center pt-[10px]">
        <button className={`h-6 w-[68px] ${softButton}`}>Fermer</button>
      </div>
    </div>
  );
}

export default function App() {
  return (
    <div className="relative flex h-screen overflow-hidden bg-white pl-[30px] font-['Liberation_Sans',Arial,sans-serif] text-[11px] leading-4 text-black">
      <main className="flex min-w-0 flex-1 flex-col border-x border-t border-[#6c8592] bg-[#9bb9c6]">
        <MenuBar />
        <ToolBar />
        <div className="flex min-h-0 flex-1">
          <Lists />
          <Chart />
        </div>
      </main>
      <aside className="flex w-[9px] shrink-0 flex-col bg-[#f0f0f0]">
        <span className="h-9 bg-[#4574a8]" />
        <span className="h-[84px] border-b border-[#b8b8b8]" />
        <span className="flex h-[22px] items-center pl-px">
          <svg width="8" height="5" viewBox="0 0 8 5"><path d="M-4 5L0 0l4 5z" fill="#a0a0a0" /></svg>
        </span>
        <span className="h-[470px] bg-[#c1c1c1]" />
      </aside>
      <Properties />
    </div>
  );
}
